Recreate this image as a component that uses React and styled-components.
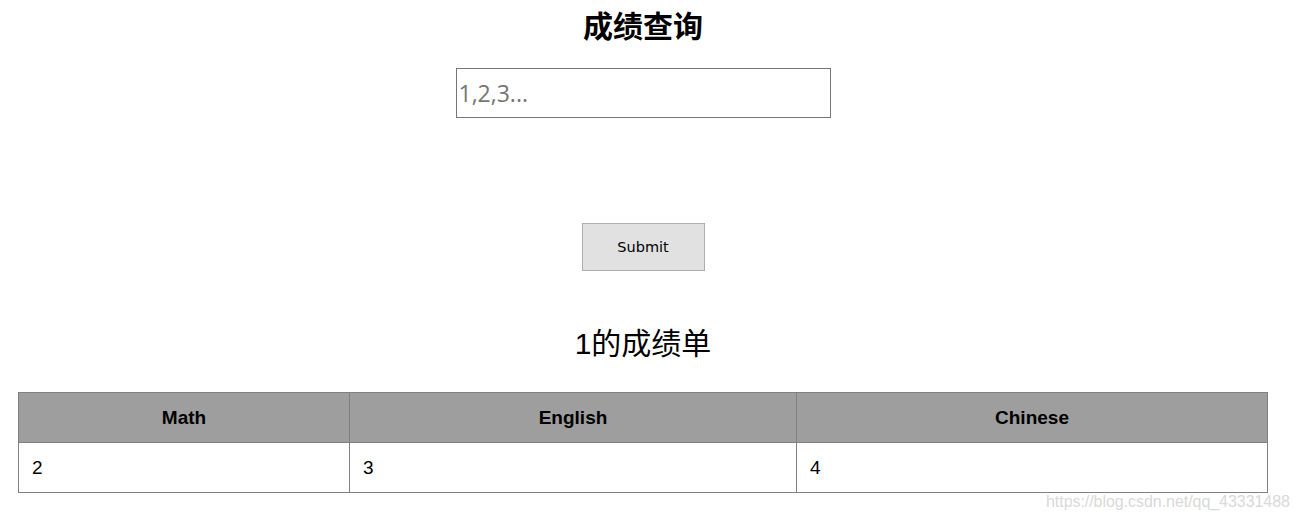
import React from "react";
import styled, { createGlobalStyle } from "styled-components";

const Global = createGlobalStyle`
  html, body { margin: 0; padding: 0; background: #fff; }
  body { font-family: "Liberation Sans", "Noto Sans CJK SC", sans-serif; color: #000; }
`;

const Page = styled.div`
  position: relative;
  width: 1286px;
  height: 520px;
  display: flex;
  flex-direction: column;
  align-items: center;
  padding-top: 5px;
  box-sizing: border-box;
`;

const Title = styled.h1`
  margin: 0;
  font-family: "Noto Sans CJK SC", sans-serif;
  font-size: 30px;
  line-height: 38px;
  font-weight: 700;
`;

const Input = styled.input`
  margin-top: 25px;
  width: 375px;
  height: 50px;
  box-sizing: border-box;
  border: 1px solid #767676;
  padding: 0 2px;
  font-family: "Open Sans", "Noto Sans", sans-serif;
  font-size: 23px;
  outline: none;
  &::placeholder { color: #757575; }
`;

const Button = styled.button`
  margin-top: 105px;
  width: 123px;
  height: 48px;
  box-sizing: border-box;
  background: #e1e1e1;
  border: 1px solid #adadad;
  font-family: "DejaVu Sans", "Liberation Sans", sans-serif;
  font-size: 14.5px;
  color: #000;
  padding: 0;
`;

const Subtitle = styled.h2`
  margin: 54px 0 0;
  font-family: "Liberation Sans", "Noto Sans CJK SC", sans-serif;
  font-size: 30px;
  line-height: 38px;
  font-weight: 400;
`;

const Table = styled.table`
  align-self: flex-start;
  margin: 29px 0 0 18px;
  width: 1249px;
  border-collapse: collapse;
  table-layout: fixed;
  font-family: "Liberation Sans", Arial, sans-serif;
  font-size: 19px;
`;

const Th = styled.th`
  width: ${(p) => p.$w}px;
  height: 50px;
  box-sizing: border-box;
  background: #9e9e9e;
  border: 1px solid #808080;
  font-weight: 700;
  text-align: center;
  padding: 0;
`;

const Td = styled.td`
  height: 50px;
  box-sizing: border-box;
  border: 1px solid #808080;
  padding: 0 13px;
  text-align: left;
`;

const Watermark = styled.div`
  position: absolute;
  left: 1046px;
  top: 493px;
  white-space: nowrap;
  font-family: "Liberation Sans", Arial, sans-serif;
  font-size: 16px;
  letter-spacing: -0.05px;
  color: #d9d9d9;
`;

const columns = [
  { name: "Math", w: 331, v: 2 },
  { name: "English", w: 447, v: 3 },
  { name: "Chinese", w: 471, v: 4 },
];

export default function App() {
  return (
    <>
      <Global />
      <Page>
        <Title>成绩查询</Title>
        <Input placeholder="1,2,3..." />
        <Button>Submit</Button>
        <Subtitle>1的成绩单</Subtitle>
        <Table>
          <thead>
            <tr>
              {columns.map((c) => (
                <Th key={c.name} $w={c.w}>{c.name}</Th>
              ))}
            </tr>
          </thead>
          <tbody>
            <tr>
              {columns.map((c) => (
                <Td key={c.name}>{c.v}</Td>
              ))}
            </tr>
          </tbody>
        </Table>
        <Watermark>https://blog.csdn.net/qq_43331488</Watermark>
      </Page>
    </>
  );
}
